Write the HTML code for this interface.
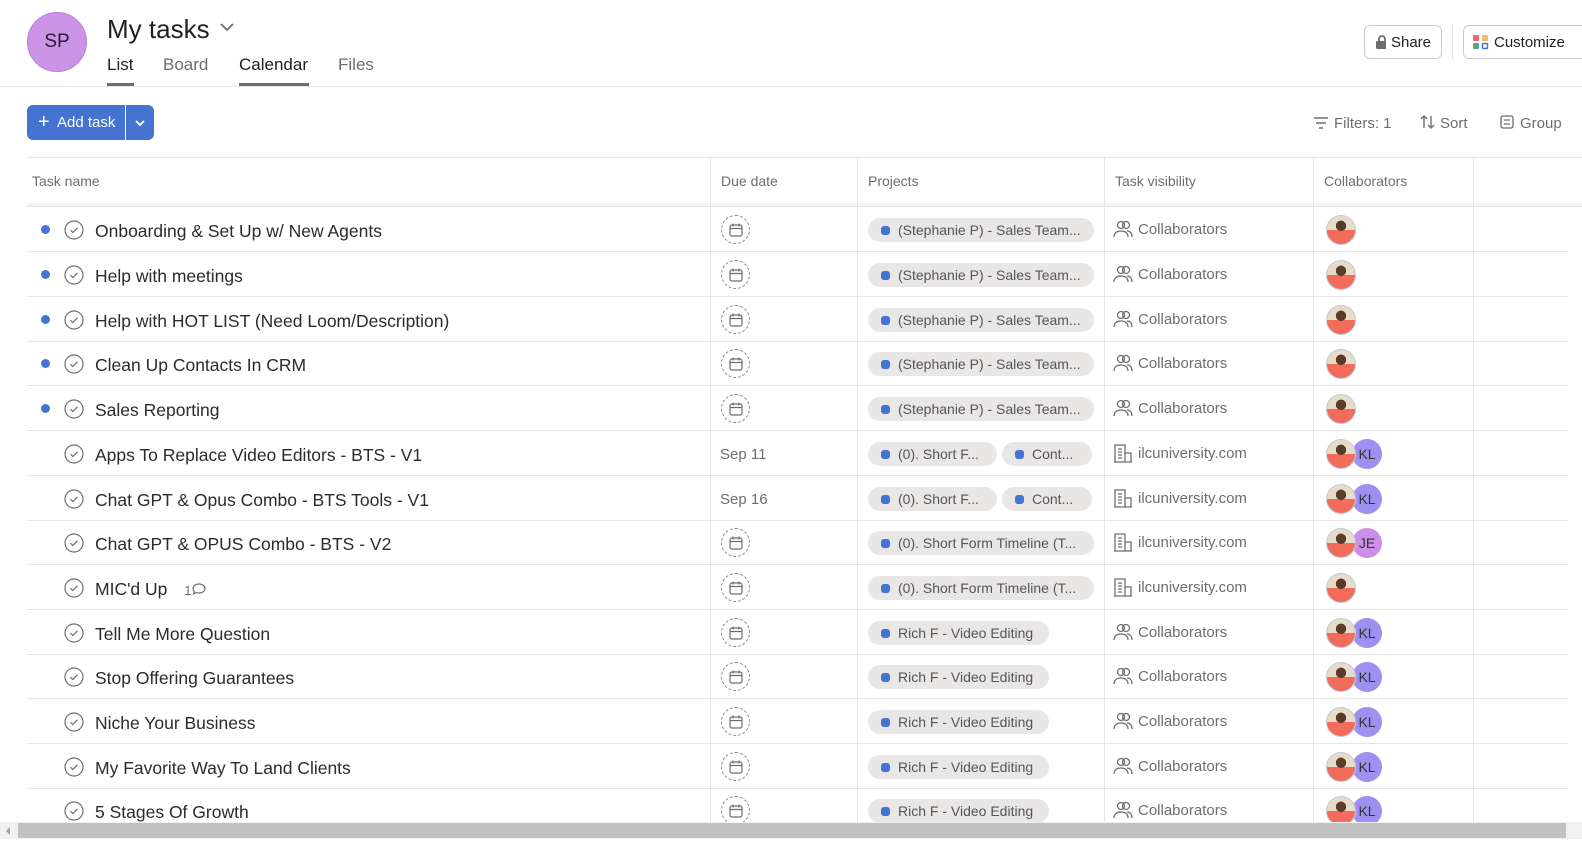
<!DOCTYPE html>
<html><head><meta charset="utf-8">
<style>
*{box-sizing:border-box;margin:0;padding:0}
body{width:1582px;height:846px;overflow:hidden;background:#fff;font-family:"Liberation Sans",sans-serif;color:#1e1f21;position:relative}
.abs{position:absolute}
.av{left:27px;top:12px;width:60px;height:60px;border-radius:50%;background:#cb94e6;border:1px solid #b97fd6;font-size:19px;color:#2a1a33;display:flex;align-items:center;justify-content:center}
.title{left:107px;top:14px;font-size:26px;color:#1e1f21}
.tab{top:55px;font-size:17px;color:#6d6e6f}
.tab.on{color:#1e1f21}
.ul{top:83px;height:3px;background:#6d6e6f}
.hline{left:0;right:0;height:1px;background:#e6e6e6}
.btn{top:25px;height:34px;border:1px solid #cfcbcb;border-radius:6px;font-size:15px;color:#1e1f21;display:flex;align-items:center;gap:5px;padding:0 10px}
.add{left:27px;top:105px;width:127px;height:35px;background:#4573d2;border-radius:6px;color:#fff;font-size:15px}
.tool{top:115px;font-size:15px;color:#6d6e6f}
.hdr{top:173px;font-size:14px;color:#6d6e6f}
.vsep{top:157px;width:1px;height:670px;background:#e6e6e6}
.row{position:absolute;left:27px;width:1541px;height:45px;border-bottom:1px solid #e6e6e6}
.row>*{position:absolute}
.dot{left:14px;top:18px;width:9px;height:9px;border-radius:50%;background:#4573d2}
.chk{left:37px;top:13px}
.name{left:68px;top:14px;font-size:17.5px;color:#2a2b2d;white-space:nowrap}
.cal{left:694px;top:8px;width:29px;height:29px;border:1px dashed #8a8a8a;border-radius:50%;display:flex;align-items:center;justify-content:center}
.date{left:693px;top:15px;font-size:15px;color:#6d6e6f}
.pill{top:11px;height:24px;border-radius:12px;background:#e9e6e6;font-size:14px;color:#555;display:flex;align-items:center;padding-left:13px;white-space:nowrap;overflow:hidden}
.pill i{display:inline-block;width:9px;height:9px;border-radius:3px;background:#4573d2;margin-right:8px}
.vis{left:1086px;top:12px;font-size:15px;color:#6d6e6f;display:flex;align-items:center;gap:5px}
.ph{left:1299px;top:8px;width:30px;height:30px;border-radius:50%;background:radial-gradient(circle at 50% 35%,#5a3a2a 0 22%,transparent 23%),linear-gradient(#e6dcc8 0 50%,#f26b5b 50%);border:1px solid #bcd}
.kl{left:1325px;top:8px;width:30px;height:30px;border-radius:50%;background:#9d90f0;font-size:14px;color:#333;display:flex;align-items:center;justify-content:center}
.je{background:#cc8fe6}
</style></head><body>
<div class="abs av">SP</div>
<div class="abs title">My tasks</div>
<svg class="abs" style="left:219px;top:21px" width="16" height="12"><path d="M2 3l6 6 6-6" stroke="#6d6e6f" stroke-width="1.8" fill="none"/></svg>
<div class="abs tab on" style="left:107px">List</div>
<div class="abs tab" style="left:163px">Board</div>
<div class="abs tab on" style="left:239px">Calendar</div>
<div class="abs tab" style="left:338px">Files</div>
<div class="abs ul" style="left:107px;width:27px"></div>
<div class="abs ul" style="left:239px;width:70px"></div>
<div class="abs hline" style="top:86px"></div>
<div class="abs btn" style="left:1364px;width:78px"><svg width="14" height="14"><rect x="1" y="6" width="12" height="8" rx="1.5" fill="#6d6e6f"/><path d="M4 6V4a3 3 0 016 0v2" stroke="#6d6e6f" stroke-width="1.8" fill="none"/></svg>Share</div>
<div class="abs" style="left:1452px;top:26px;width:1px;height:33px;background:#e6e6e6"></div>
<div class="abs btn" style="left:1463px;width:130px;padding-left:9px"><svg width="16" height="16"><rect x="0" y="1" width="6" height="6" rx="1" fill="#ec6a6a"/><rect x="9" y="1" width="6" height="6" rx="1" fill="#f1bd6c"/><rect x="0" y="9" width="6" height="6" rx="1" fill="#5da283"/><rect x="9.5" y="9.5" width="5" height="5" rx="1" stroke="#4573d2" stroke-width="1.5" fill="none"/></svg>Customize</div>
<div class="abs add"><span style="position:absolute;left:11px;top:7px;font-size:20px;line-height:20px">+</span><span style="position:absolute;left:30px;top:9px">Add task</span><div style="position:absolute;left:98px;top:0;width:1px;height:35px;background:#fff"></div><svg style="position:absolute;left:107px;top:13px" width="12" height="10"><path d="M2 3l4 4 4-4" stroke="#fff" stroke-width="1.8" fill="none"/></svg></div>
<svg class="abs" style="left:1313px;top:116px" width="16" height="14"><path d="M1 2h14M3 7h10M6 12h4" stroke="#6d6e6f" stroke-width="1.4"/></svg>
<div class="abs tool" style="left:1334px">Filters: 1</div>
<svg class="abs" style="left:1420px;top:114px" width="16" height="16"><path d="M4 14V2M1 5l3-3 3 3M11 2v12M8 11l3 3 3-3" stroke="#6d6e6f" stroke-width="1.4" fill="none"/></svg>
<div class="abs tool" style="left:1440px">Sort</div>
<svg class="abs" style="left:1500px;top:115px" width="14" height="14"><rect x="1" y="1" width="12" height="12" rx="2" stroke="#6d6e6f" stroke-width="1.3" fill="none"/><path d="M4 5h6M4 9h6" stroke="#6d6e6f" stroke-width="1.3"/></svg>
<div class="abs tool" style="left:1520px">Group</div>
<div class="abs" style="left:27px;right:0;top:157px;height:1px;background:#e6e6e6"></div>
<div class="abs" style="left:27px;right:0;top:203px;height:4px;background:#f4f4f4;border-bottom:1px solid #e6e6e6"></div>
<div class="abs hdr" style="left:32px">Task name</div>
<div class="abs hdr" style="left:721px">Due date</div>
<div class="abs hdr" style="left:868px">Projects</div>
<div class="abs hdr" style="left:1115px">Task visibility</div>
<div class="abs hdr" style="left:1324px">Collaborators</div>
<div class="abs vsep" style="left:710px"></div><div class="abs vsep" style="left:857px"></div><div class="abs vsep" style="left:1104px"></div><div class="abs vsep" style="left:1313px"></div><div class="abs vsep" style="left:1473px"></div>

<svg width="0" height="0" style="position:absolute"><defs>
<symbol id="ck" viewBox="0 0 20 20"><circle cx="10" cy="10" r="9" stroke="#6d6e6f" stroke-width="1.2" fill="none"/><path d="M6.5 10.2l2.3 2.3 4.7-4.7" stroke="#6d6e6f" stroke-width="1.2" fill="none"/></symbol>
<symbol id="cl" viewBox="0 0 16 16"><rect x="2" y="3" width="12" height="11" rx="2" stroke="#6d6e6f" stroke-width="1.2" fill="none"/><path d="M2 6.5h12M5 1.5v3M11 1.5v3" stroke="#6d6e6f" stroke-width="1.2"/></symbol>
<symbol id="pp" viewBox="0 0 20 20"><circle cx="8" cy="6" r="3.5" stroke="#6d6e6f" stroke-width="1.3" fill="none"/><circle cx="13" cy="6" r="3.5" stroke="#6d6e6f" stroke-width="1.3" fill="none"/><path d="M1 18c0-4 3-6 7-6s7 2 7 6M14 12c3 0 5 2 5 6" stroke="#6d6e6f" stroke-width="1.3" fill="none"/></symbol>
<symbol id="bd" viewBox="0 0 20 20"><path d="M2 19V2h10v17M12 10h6v9M1 19h18M5 6h4M5 9h4M5 12h4M5 15h4" stroke="#6d6e6f" stroke-width="1.3" fill="none"/></symbol>
</defs></svg>

<div class="row" style="top:207px"><div class="dot"></div><svg class="chk" width="20" height="20"><use href="#ck"/></svg><div class="name">Onboarding &amp; Set Up w/ New Agents</div><div class="cal"><svg width="16" height="16"><use href="#cl"/></svg></div><div class="pill" style="left:841px;width:226px"><i></i>(Stephanie P) - Sales Team...</div><div class="vis"><svg width="20" height="20"><use href="#pp"/></svg>Collaborators</div><div class="ph"></div></div>
<div class="row" style="top:252px"><div class="dot"></div><svg class="chk" width="20" height="20"><use href="#ck"/></svg><div class="name">Help with meetings</div><div class="cal"><svg width="16" height="16"><use href="#cl"/></svg></div><div class="pill" style="left:841px;width:226px"><i></i>(Stephanie P) - Sales Team...</div><div class="vis"><svg width="20" height="20"><use href="#pp"/></svg>Collaborators</div><div class="ph"></div></div>
<div class="row" style="top:297px"><div class="dot"></div><svg class="chk" width="20" height="20"><use href="#ck"/></svg><div class="name">Help with HOT LIST (Need Loom/Description)</div><div class="cal"><svg width="16" height="16"><use href="#cl"/></svg></div><div class="pill" style="left:841px;width:226px"><i></i>(Stephanie P) - Sales Team...</div><div class="vis"><svg width="20" height="20"><use href="#pp"/></svg>Collaborators</div><div class="ph"></div></div>
<div class="row" style="top:341px"><div class="dot"></div><svg class="chk" width="20" height="20"><use href="#ck"/></svg><div class="name">Clean Up Contacts In CRM</div><div class="cal"><svg width="16" height="16"><use href="#cl"/></svg></div><div class="pill" style="left:841px;width:226px"><i></i>(Stephanie P) - Sales Team...</div><div class="vis"><svg width="20" height="20"><use href="#pp"/></svg>Collaborators</div><div class="ph"></div></div>
<div class="row" style="top:386px"><div class="dot"></div><svg class="chk" width="20" height="20"><use href="#ck"/></svg><div class="name">Sales Reporting</div><div class="cal"><svg width="16" height="16"><use href="#cl"/></svg></div><div class="pill" style="left:841px;width:226px"><i></i>(Stephanie P) - Sales Team...</div><div class="vis"><svg width="20" height="20"><use href="#pp"/></svg>Collaborators</div><div class="ph"></div></div>
<div class="row" style="top:431px"><svg class="chk" width="20" height="20"><use href="#ck"/></svg><div class="name">Apps To Replace Video Editors - BTS - V1</div><div class="date">Sep 11</div><div class="pill" style="left:841px;width:129px"><i></i>(0). Short F...</div><div class="pill" style="left:975px;width:90px"><i></i>Cont...</div><div class="vis"><svg width="20" height="20"><use href="#bd"/></svg>ilcuniversity.com</div><div class="kl">KL</div><div class="ph"></div></div>
<div class="row" style="top:476px"><svg class="chk" width="20" height="20"><use href="#ck"/></svg><div class="name">Chat GPT &amp; Opus Combo - BTS Tools - V1</div><div class="date">Sep 16</div><div class="pill" style="left:841px;width:129px"><i></i>(0). Short F...</div><div class="pill" style="left:975px;width:90px"><i></i>Cont...</div><div class="vis"><svg width="20" height="20"><use href="#bd"/></svg>ilcuniversity.com</div><div class="kl">KL</div><div class="ph"></div></div>
<div class="row" style="top:520px"><svg class="chk" width="20" height="20"><use href="#ck"/></svg><div class="name">Chat GPT &amp; OPUS Combo - BTS - V2</div><div class="cal"><svg width="16" height="16"><use href="#cl"/></svg></div><div class="pill" style="left:841px;width:226px"><i></i>(0). Short Form Timeline (T...</div><div class="vis"><svg width="20" height="20"><use href="#bd"/></svg>ilcuniversity.com</div><div class="kl je">JE</div><div class="ph"></div></div>
<div class="row" style="top:565px"><svg class="chk" width="20" height="20"><use href="#ck"/></svg><div class="name">MIC'd Up <span style="font-size:13px;color:#6d6e6f;margin-left:12px">1</span><svg width="16" height="14" style="vertical-align:-1px"><path d="M8 2c3.5 0 6 2 6 4.5S11.5 11 8 11c-1 0-2-.2-2.8-.5L2.5 12l.8-2.5C2.5 8.7 2 7.7 2 6.5 2 4 4.5 2 8 2z" stroke="#6d6e6f" stroke-width="1.2" fill="none"/></svg></div><div class="cal"><svg width="16" height="16"><use href="#cl"/></svg></div><div class="pill" style="left:841px;width:226px"><i></i>(0). Short Form Timeline (T...</div><div class="vis"><svg width="20" height="20"><use href="#bd"/></svg>ilcuniversity.com</div><div class="ph"></div></div>
<div class="row" style="top:610px"><svg class="chk" width="20" height="20"><use href="#ck"/></svg><div class="name">Tell Me More Question</div><div class="cal"><svg width="16" height="16"><use href="#cl"/></svg></div><div class="pill" style="left:841px;width:181px"><i></i>Rich F - Video Editing</div><div class="vis"><svg width="20" height="20"><use href="#pp"/></svg>Collaborators</div><div class="kl">KL</div><div class="ph"></div></div>
<div class="row" style="top:654px"><svg class="chk" width="20" height="20"><use href="#ck"/></svg><div class="name">Stop Offering Guarantees</div><div class="cal"><svg width="16" height="16"><use href="#cl"/></svg></div><div class="pill" style="left:841px;width:181px"><i></i>Rich F - Video Editing</div><div class="vis"><svg width="20" height="20"><use href="#pp"/></svg>Collaborators</div><div class="kl">KL</div><div class="ph"></div></div>
<div class="row" style="top:699px"><svg class="chk" width="20" height="20"><use href="#ck"/></svg><div class="name">Niche Your Business</div><div class="cal"><svg width="16" height="16"><use href="#cl"/></svg></div><div class="pill" style="left:841px;width:181px"><i></i>Rich F - Video Editing</div><div class="vis"><svg width="20" height="20"><use href="#pp"/></svg>Collaborators</div><div class="kl">KL</div><div class="ph"></div></div>
<div class="row" style="top:744px"><svg class="chk" width="20" height="20"><use href="#ck"/></svg><div class="name">My Favorite Way To Land Clients</div><div class="cal"><svg width="16" height="16"><use href="#cl"/></svg></div><div class="pill" style="left:841px;width:181px"><i></i>Rich F - Video Editing</div><div class="vis"><svg width="20" height="20"><use href="#pp"/></svg>Collaborators</div><div class="kl">KL</div><div class="ph"></div></div>
<div class="row" style="top:788px"><svg class="chk" width="20" height="20"><use href="#ck"/></svg><div class="name">5 Stages Of Growth</div><div class="cal"><svg width="16" height="16"><use href="#cl"/></svg></div><div class="pill" style="left:841px;width:181px"><i></i>Rich F - Video Editing</div><div class="vis"><svg width="20" height="20"><use href="#pp"/></svg>Collaborators</div><div class="kl">KL</div><div class="ph"></div></div>

<div class="abs" style="left:0;top:822px;width:1582px;height:17px;background:#f1f1f1"></div>
<div class="abs" style="left:18px;top:823px;width:1548px;height:15px;background:#c1c1c1"></div>
<svg class="abs" style="left:4px;top:826px" width="8" height="10"><path d="M6 1L2 5l4 4z" fill="#a3a3a3"/></svg>
<div class="abs" style="left:0;top:839px;width:1582px;height:7px;background:#fff"></div>
</body></html>
